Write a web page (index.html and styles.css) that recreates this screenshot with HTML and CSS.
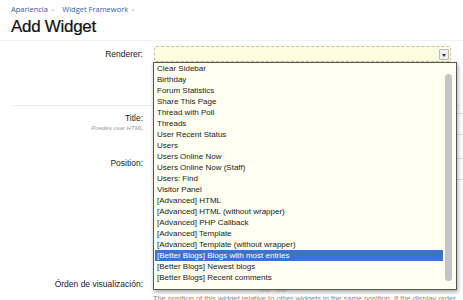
FILE: index.html
```html
<!DOCTYPE html>
<html lang="es">
<head>
    <meta charset="UTF-8">
    <title>Add Widget</title>
    <link rel="stylesheet" href="styles.css">
</head>
<body>

<div class="page">
    <div class="breadcrumb">
        <a href="#">Apariencia</a> <span class="arrow">&gt;</span>
        <a href="#">Widget Framework</a> <span class="arrow">&gt;</span>
    </div>
    <h1>Add Widget</h1>

    <form class="form">
        <!-- Renderer -->
        <div class="row row-renderer">
            <label class="label">Renderer:</label>
            <div class="control">
                <div class="select">
                    <span class="select-arrow"></span>
                </div>
            </div>
        </div>

        <div class="sep"></div>

        <!-- Title -->
        <div class="row row-title">
            <div class="label">Title:<span class="hint">Puedes usar HTML</span></div>
            <div class="control"><div class="textbox"></div></div>
        </div>

        <!-- Position -->
        <div class="row row-position">
            <div class="label">Position:</div>
            <div class="control"><div class="textbox"></div></div>
        </div>

        <!-- Display order -->
        <div class="row row-order">
            <div class="label">Órden de visualización:</div>
            <div class="control">
                <div class="spinner"><span class="num">0</span><span class="btn"></span><span class="btn"></span></div>
            </div>
        </div>
        <p class="explain">The position of this widget relative to other widgets in the same position. If the display order</p>
    </form>

    <!-- open renderer list -->
    <div class="dropdown">
        <ul class="options">
            <li>Clear Sidebar</li>
            <li>Birthday</li>
            <li>Forum Statistics</li>
            <li>Share This Page</li>
            <li>Thread with Poll</li>
            <li>Threads</li>
            <li>User Recent Status</li>
            <li>Users</li>
            <li>Users Online Now</li>
            <li>Users Online Now (Staff)</li>
            <li>Users: Find</li>
            <li>Visitor Panel</li>
            <li>[Advanced] HTML</li>
            <li>[Advanced] HTML (without wrapper)</li>
            <li>[Advanced] PHP Callback</li>
            <li>[Advanced] Template</li>
            <li>[Advanced] Template (without wrapper)</li>
            <li class="selected">[Better Blogs] Blogs with most entries</li>
            <li>[Better Blogs] Newest blogs</li>
            <li>[Better Blogs] Recent comments</li>
        </ul>
        <div class="scrollbar"></div>
    </div>
</div>

</body>
</html>
```

FILE: styles.css
```css
body {
    margin: 0;
    font-family: "Liberation Sans", Arial, sans-serif;
    background-color: #fff;
    color: #222;
}

.page {
    position: relative;
    height: 300px;
    overflow: hidden;
}

.breadcrumb {
    padding: 4px 11px 0;
    font-family: "Open Sans", sans-serif;
    font-size: 7.5px;
    line-height: 10px;
}

.breadcrumb a {
    color: #2e5f9e;
    text-decoration: none;
    margin-right: 1px;
}

.breadcrumb .arrow {
    color: #7a8ca6;
    font-size: 6px;
    margin-right: 6px;
}

h1 {
    margin: 1px 0 0 11px;
    font-size: 17px;
    line-height: 22px;
    font-weight: normal;
    letter-spacing: -0.3px;
    color: #111;
    -webkit-text-stroke: 0.2px #111;
}

.form {
    margin-top: 2px;
    border-top: 1px solid #f0f2f5;
}

.row {
    display: grid;
    grid-template-columns: 143px 1fr;
    column-gap: 11px;
}

.label {
    text-align: right;
    font-size: 8.5px;
    color: #1a1a1a;
    line-height: 11px;
}

.hint {
    display: block;
    font-size: 6px;
    font-style: italic;
    color: #999;
    line-height: 8px;
}

.row-renderer {
    padding-top: 5px;
    align-items: center;
}

.select {
    position: relative;
    height: 14px;
    margin-right: 12px;
    background-color: #fffde0;
    border: 1px dashed #c8c29c;
    border-radius: 2px;
}

.select-arrow {
    position: absolute;
    right: 1px;
    top: 2px;
    width: 8px;
    height: 9px;
    background-color: #f2f2f2;
    border: 1px solid #bbb;
    border-radius: 1px;
}

.select-arrow::after {
    content: "";
    position: absolute;
    left: 2px;
    top: 4px;
    border-left: 2px solid transparent;
    border-right: 2px solid transparent;
    border-top: 3px solid #333;
}

.sep {
    margin: 43px 3px 0 12px;
    border-top: 1px solid #e8ebf0;
}

.row-title {
    padding-top: 7px;
}

.textbox {
    height: 20px;
    margin-right: -6px;
    border: 1px solid #ddd;
    border-radius: 3px;
}

.row-position {
    padding-top: 23px;
}

.row-order {
    padding-top: 99px;
    align-items: start;
}

.spinner {
    margin: 3px 0 0 94px;
    display: flex;
    align-items: center;
    gap: 2px;
    font-size: 8.5px;
    color: #555;
}

.spinner .num {
    margin-right: 3px;
}

.spinner .btn {
    width: 14px;
    height: 10px;
    background-color: #e6e6e6;
    border-radius: 4px;
}

.explain {
    margin: 2px 0 0 153px;
    font-size: 7.5px;
    color: #888;
    white-space: nowrap;
}

.dropdown {
    position: absolute;
    left: 153px;
    top: 62px;
    width: 302px;
    height: 226px;
    background-color: #fffff2;
    border: 1px solid #555;
    box-shadow: 1px 2px 4px rgba(0,0,0,0.35);
}

.options {
    margin: 0;
    padding: 0 13px 0 1px;
    list-style: none;
}

.options li {
    height: 11px;
    line-height: 11px;
    padding-left: 2px;
    font-size: 8px;
    color: #1a1a1a;
    white-space: nowrap;
}

.options li.selected {
    background-color: #3a74cc;
    color: #fff;
}

.scrollbar {
    position: absolute;
    right: 4px;
    top: 11px;
    width: 7px;
    height: 207px;
    background-color: #c4c4c4;
    border-radius: 4px;
}
```
